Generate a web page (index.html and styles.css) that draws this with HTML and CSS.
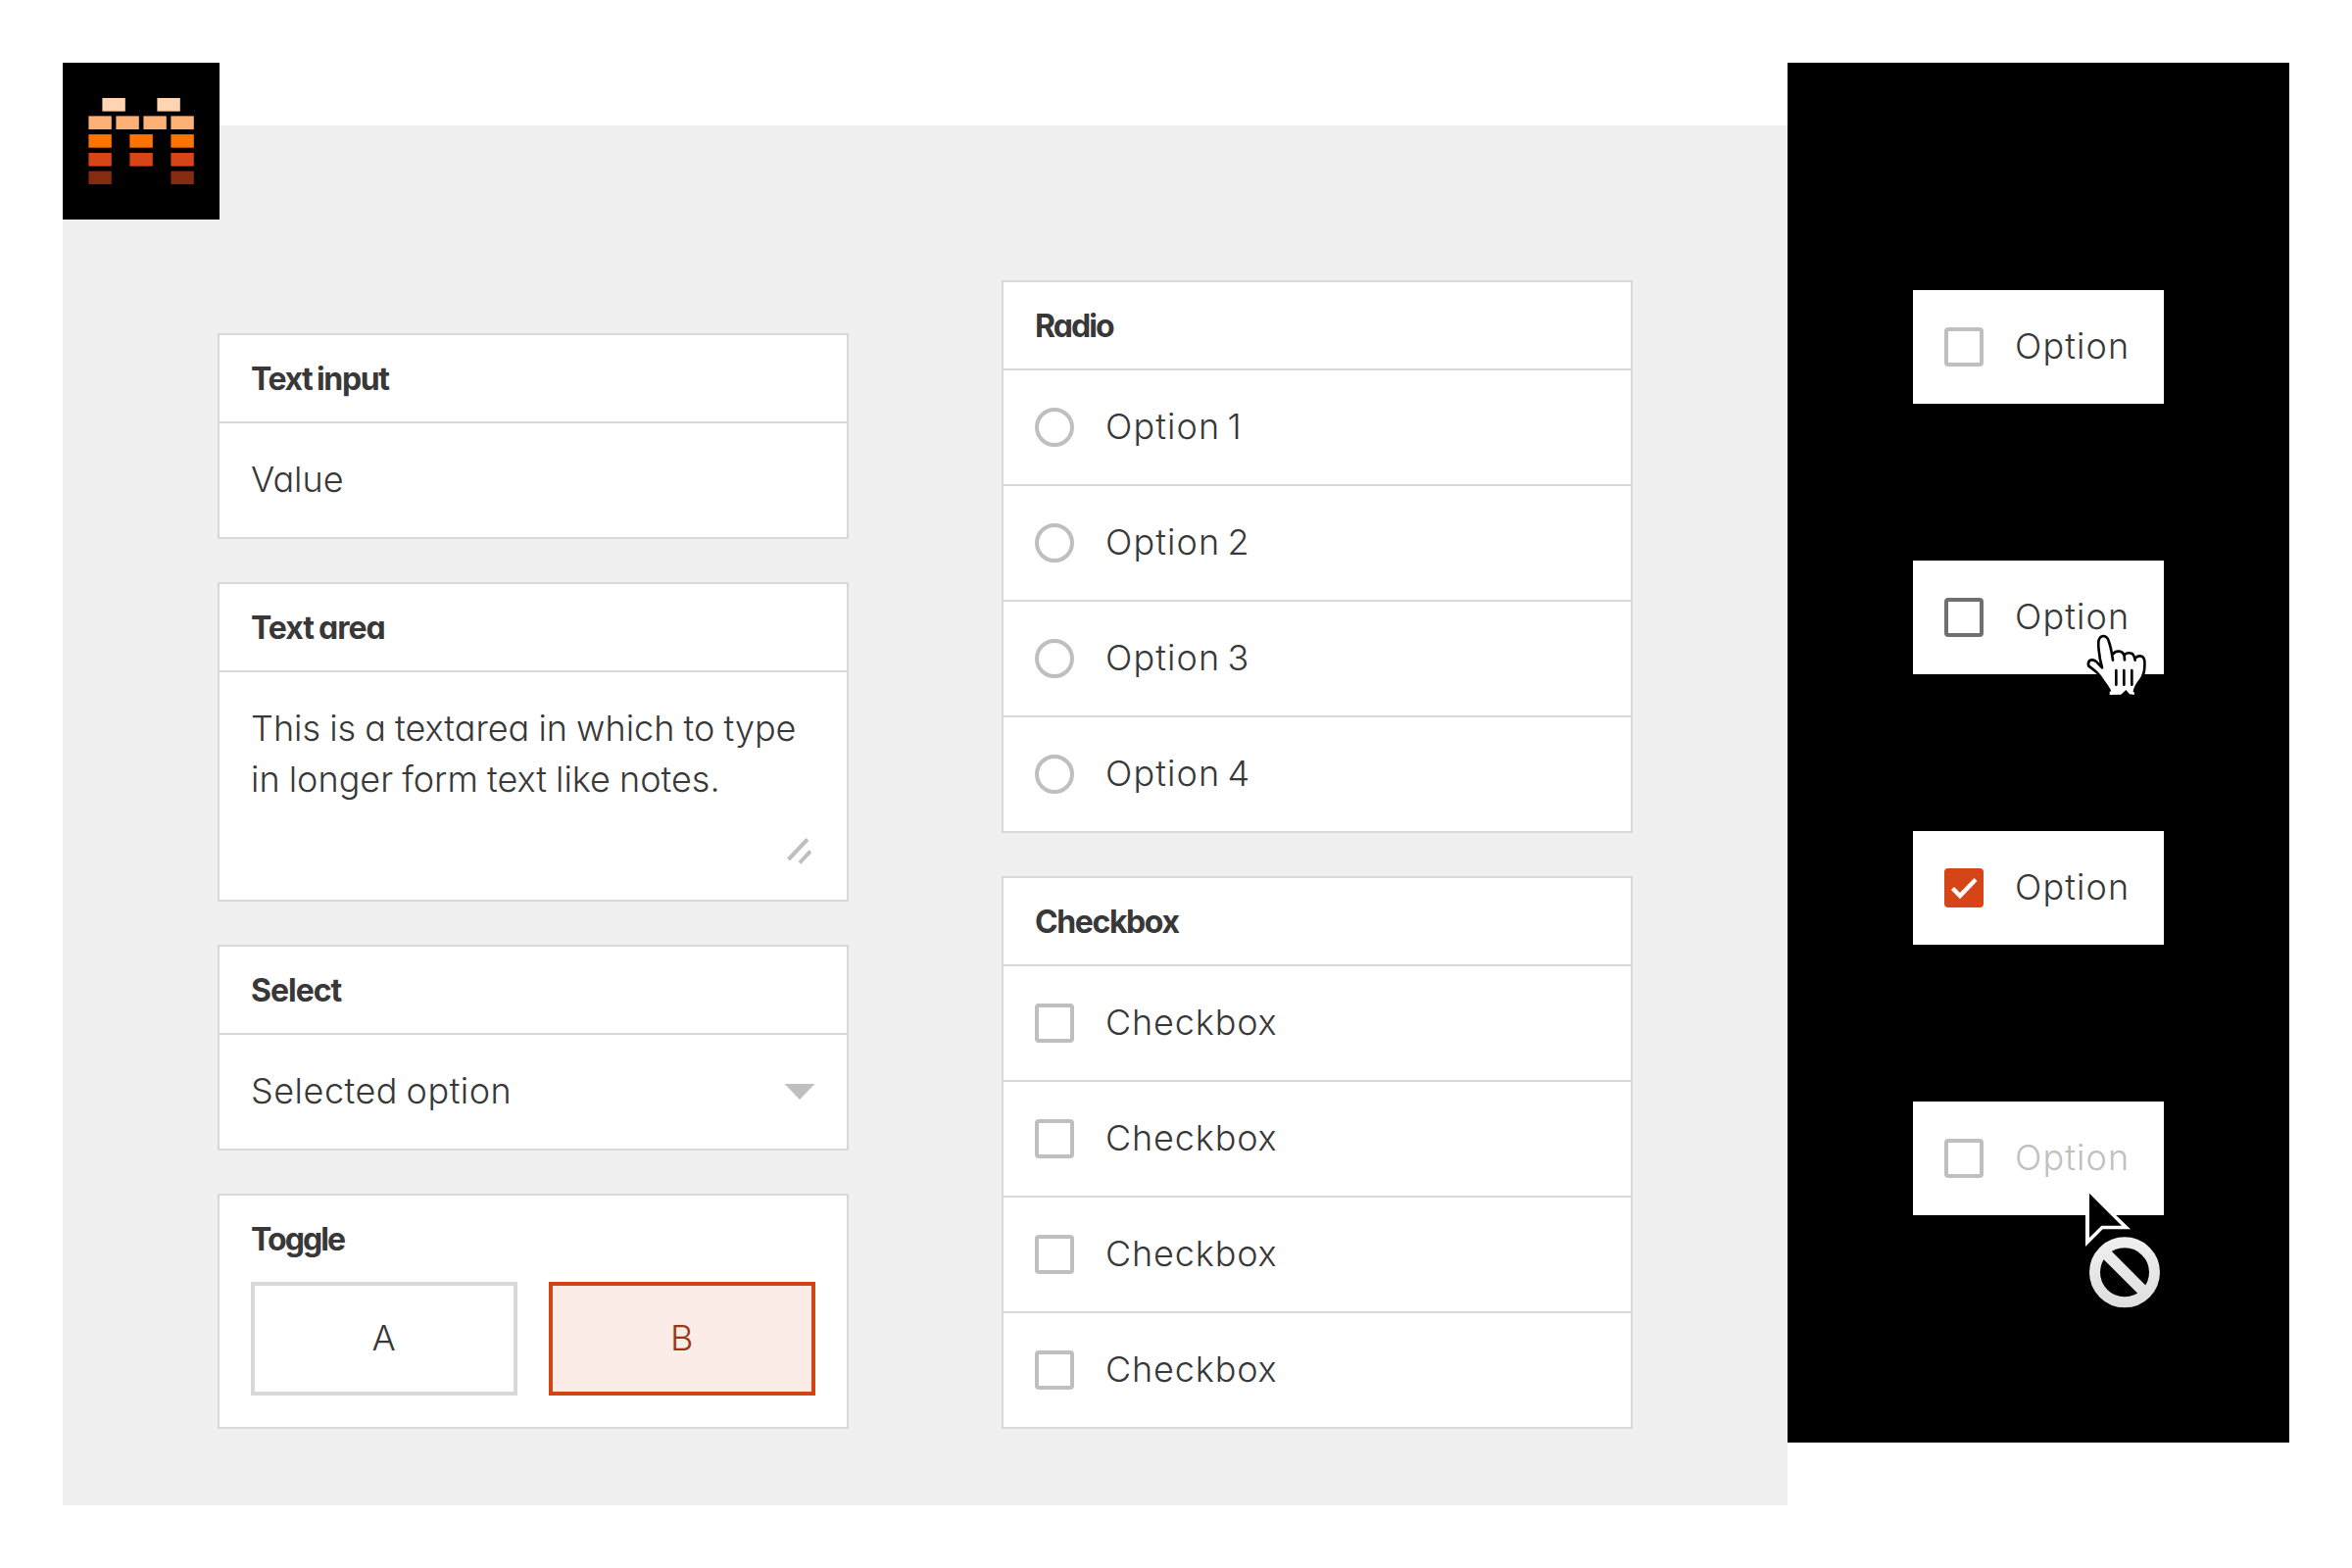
FILE: index.html
```html
<!DOCTYPE html>
<html lang="en">
<head>
  <meta charset="UTF-8">
  <meta name="viewport" content="width=device-width, initial-scale=1.0">
  <title>Form elements</title>
  <link rel="stylesheet" href="styles.css">
</head>
<body>
  <main class="board">
    <div class="logo">
      <svg width="160" height="160" viewBox="0 0 160 160">
        <g fill="#ffd4b3">
          <rect x="40.4" y="36" width="23.4" height="13.6"/>
          <rect x="96.4" y="36" width="23.4" height="13.6"/>
        </g>
        <g fill="#ffb074">
          <rect x="26.4" y="54.4" width="23.4" height="13.6"/>
          <rect x="54.4" y="54.4" width="23.4" height="13.6"/>
          <rect x="82.4" y="54.4" width="23.4" height="13.6"/>
          <rect x="110.4" y="54.4" width="23.4" height="13.6"/>
        </g>
        <g fill="#ff7300">
          <rect x="26.4" y="73.1" width="23.4" height="13.6"/>
          <rect x="68.4" y="73.1" width="23.4" height="13.6"/>
          <rect x="110.4" y="73.1" width="23.4" height="13.6"/>
        </g>
        <g fill="#d64517">
          <rect x="26.4" y="92" width="23.4" height="13.6"/>
          <rect x="68.4" y="92" width="23.4" height="13.6"/>
          <rect x="110.4" y="92" width="23.4" height="13.6"/>
        </g>
        <g fill="#842b10">
          <rect x="26.4" y="110.6" width="23.4" height="13.4"/>
          <rect x="110.4" y="110.6" width="23.4" height="13.4"/>
        </g>
      </svg>
    </div>

    <section class="forms">
      <div class="column">
        <div class="card">
          <h2 class="title">Text input</h2>
          <div class="row"><span class="text value">Value</span></div>
        </div>

        <div class="card">
          <h2 class="title loose">Text area</h2>
          <div class="row area">
            <p class="text notes">This is a textarea in which to type<br>in longer form text like notes.</p>
            <svg class="resize" width="28" height="30" viewBox="0 0 28 30">
              <path d="M4.5 24 L24 3.5 M16 27.5 L27 15.5" fill="none" stroke="#bfbfbf" stroke-width="4"/>
            </svg>
          </div>
        </div>

        <div class="card">
          <h2 class="title loose">Select</h2>
          <div class="row select">
            <span class="text selected">Selected option</span>
            <svg width="32" height="16" viewBox="0 0 32 16"><path d="M0.5 0 H31.5 L16 16 Z" fill="#bfbfbf"/></svg>
          </div>
        </div>

        <div class="card">
          <h2 class="title tight">Toggle</h2>
          <div class="toggle">
            <button class="toggle-btn"><span class="text">A</span></button>
            <button class="toggle-btn active"><span class="text">B</span></button>
          </div>
        </div>
      </div>

      <div class="column">
        <div class="card">
          <h2 class="title tight">Radio</h2>
          <label class="row"><i class="mark radio"></i><span class="text option">Option 1</span></label>
          <label class="row"><i class="mark radio"></i><span class="text option">Option 2</span></label>
          <label class="row"><i class="mark radio"></i><span class="text option">Option 3</span></label>
          <label class="row"><i class="mark radio"></i><span class="text option">Option 4</span></label>
        </div>

        <div class="card">
          <h2 class="title">Checkbox</h2>
          <label class="row"><i class="mark"></i><span class="text">Checkbox</span></label>
          <label class="row"><i class="mark"></i><span class="text">Checkbox</span></label>
          <label class="row"><i class="mark"></i><span class="text">Checkbox</span></label>
          <label class="row"><i class="mark"></i><span class="text">Checkbox</span></label>
        </div>
      </div>
    </section>

    <aside class="states">
      <label class="state"><i class="mark"></i><span class="text option">Option</span></label>

      <label class="state">
        <i class="mark hover"></i><span class="text option">Option</span>
        <svg class="cursor hand" width="66" height="66" viewBox="560 255 198 198">
          <path d="M637 447 V434 Q630 420 618 405 Q604 383 594 375 Q584 367 573 359 Q569 350 576 342 Q586 337 597 346 L614 364 Q606 335 604 310 Q602 297 603 283 Q606 268 618 267 Q630 268 634 282 Q641 300 646 326 Q654 312 666 314 Q676 315 682 326 Q691 316 704 320 Q711 323 715 335 Q726 325 737 330 Q746 335 744 360 Q744 385 730 403 Q716 420 712 447 L698 445 L687 432 L672 446 Z" fill="#fff"/>
          <path d="M637 434 Q630 420 618 405 Q604 383 594 375 Q584 367 573 359 Q569 350 576 342 Q586 337 597 346 L614 364 Q606 335 604 310 Q602 297 603 283 Q606 268 618 267 Q630 268 634 282 Q641 300 647 341 M648 322 Q654 313 666 314 Q678 315 682 328 L683 340 M683 324 Q691 316 704 320 Q712 324 715 341 M716 334 Q726 325 737 330 Q746 335 744 360 Q744 385 730 403 Q716 420 713 436 M657 372 V416 M681 372 V416 M705 372 V416" fill="none" stroke="#000" stroke-width="8" stroke-linecap="round" stroke-linejoin="round"/>
        </svg>
      </label>

      <label class="state">
        <i class="mark checked"><svg width="40" height="40" viewBox="0 0 40 40"><path d="M8.5 20.5 L16 28 L32 11.5" fill="none" stroke="#fff" stroke-width="4.4"/></svg></i>
        <span class="text option">Option</span>
      </label>

      <label class="state disabled">
        <i class="mark"></i><span class="text option">Option</span>
        <svg class="cursor blocked" width="83" height="127" viewBox="555 300 249 381">
          <defs>
            <linearGradient id="ring" x1="0" y1="457" x2="0" y2="673" gradientUnits="userSpaceOnUse">
              <stop offset="0" stop-color="#f0f0f0"/>
              <stop offset="1" stop-color="#dedede"/>
            </linearGradient>
          </defs>
          <path d="M564 300 V486 L617 433 H702 Z" fill="#fff"/>
          <path d="M576 323 V459 L613 422 H675 Z" fill="#000"/>
          <circle cx="684" cy="565" r="91.5" fill="#000" stroke="url(#ring)" stroke-width="33"/>
          <path d="M628 509 L740 621" stroke="url(#ring)" stroke-width="35"/>
        </svg>
      </label>
    </aside>
  </main>
</body>
</html>
```
FILE: styles.css
```css
* {
  box-sizing: border-box;
}
body {
  margin: 0;
  background: #fff;
  color: #383838;
  font-family: Inter, "Open Sans", sans-serif;
  font-feature-settings: "cv11"; /* Single-storey a */
}
.board {
  position: relative;
  display: flex;
  align-items: flex-start;
  width: 2400px;
  height: 1600px;
  padding: 64px;
}
.logo {
  position: absolute; /* Overlaps the corner of the panel */
  top: 64px;
  left: 64px;
  width: 160px;
  height: 160px;
  background: #000;
}
svg {
  display: block;
}

/* Form panel */
.forms {
  display: flex;
  align-items: flex-end;
  gap: 156px;
  width: 1760px;
  height: 1408px;
  margin-top: 64px;
  padding: 0 158px 78px;
  background: #f0f0f0;
}
.column {
  display: flex;
  flex-direction: column;
  gap: 44px;
  width: 644px;
}
.card {
  border: 2px solid #d8d8d8;
  background: #fff;
}
.title {
  height: 88px;
  margin: 0;
  padding: 0 32px;
  font-size: 32px;
  font-weight: 700;
  line-height: 90px;
  letter-spacing: -1.4px;
  word-spacing: -1.5px;
  white-space: nowrap;
}
.title.loose {
  letter-spacing: -1px;
}
.title.tight {
  letter-spacing: -1.9px;
}
.row {
  display: flex;
  align-items: center;
  gap: 32px;
  height: 118px;
  padding: 0 32px;
  border-top: 2px solid #d8d8d8;
}
.text {
  margin: 0;
  padding-bottom: 2px;
  font-size: 36px;
  font-weight: 300;
  line-height: 52px;
  letter-spacing: 0.85px;
  white-space: nowrap;
}
.text.value {
  letter-spacing: 0;
}
.text.notes {
  letter-spacing: 0;
  word-spacing: -1px;
}
.text.selected {
  letter-spacing: 0.5px;
  word-spacing: -2px;
}
.text.option {
  letter-spacing: 1.1px;
  word-spacing: -4px;
}
.area {
  flex-direction: column;
  align-items: flex-start;
  justify-content: space-between;
  gap: 0;
  height: 234px;
  padding: 31px 36px 35px 32px;
}
.resize {
  align-self: flex-end;
}
.select {
  justify-content: space-between;
}

/* Toggle */
.toggle {
  display: flex;
  gap: 32px;
  padding: 0 32px 32px;
}
.toggle-btn {
  display: flex;
  flex: 1;
  align-items: center;
  justify-content: center;
  height: 116px;
  padding: 0;
  border: 4px solid #d8d8d8;
  background: #fff;
  color: inherit;
  font: inherit;
  font-feature-settings: inherit;
}
.toggle-btn .text {
  padding-bottom: 3px;
}
.toggle-btn.active {
  border-color: #d04415;
  background: #fbece7;
  color: #9c3414;
}

/* Radio and checkbox marks */
.mark {
  flex: none;
  width: 40px;
  height: 40px;
  border: 4px solid #bfbfbf;
  border-radius: 4px;
}
.mark.radio {
  border-radius: 50%;
}
.mark.hover {
  border-color: #707070;
}
.mark.checked {
  border: none;
  background: #d64517;
}

/* Checkbox states */
.states {
  display: flex;
  flex-direction: column;
  align-items: center;
  justify-content: center;
  gap: 160px;
  width: 512px;
  height: 1408px;
  background: #000;
}
.state {
  position: relative;
  display: flex;
  align-items: center;
  gap: 32px;
  width: 256px;
  height: 116px;
  padding: 0 32px;
  background: #fff;
}
.disabled {
  color: #bfbfbf;
}
.cursor {
  position: absolute;
}
.hand {
  top: 73px;
  left: 175px;
}
.blocked {
  top: 86px;
  left: 173px;
}
```
